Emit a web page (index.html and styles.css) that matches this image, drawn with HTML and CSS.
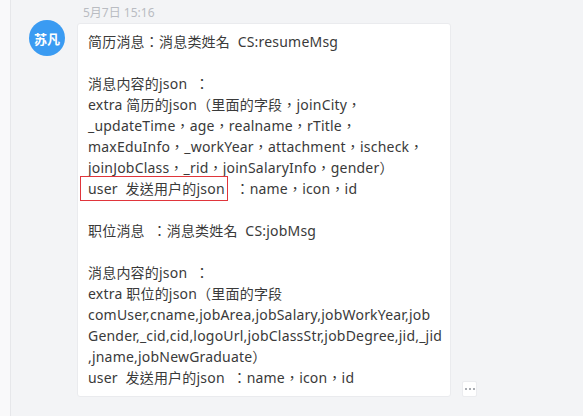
FILE: index.html
```html
<!DOCTYPE html>
<html lang="zh-Hant">
<head>
<meta charset="utf-8">
<link rel="stylesheet" href="styles.css">
</head>
<body>
<div class="page">
  <div class="rail"></div>
  <div class="chat">
    <div class="time">5月7日 15:16</div>
    <div class="msg">
      <div class="avatar">苏凡</div>
      <div class="bubble">
        <p>简历消息：消息类姓名 &nbsp;CS:resumeMsg</p>
        <p class="gap">消息内容的json &nbsp;：<br>
        extra 简历的json（里面的字段，joinCity，<br>
        _updateTime，age，realname，rTitle，<br>
        maxEduInfo，_workYear，attachment，ischeck，<br>
        joinJobClass，_rid，joinSalaryInfo，gender）<br>
        <span class="mark">user &nbsp;发送用户的json</span> &nbsp;：name，icon，id</p>
        <p class="gap">职位消息 &nbsp;：消息类姓名 &nbsp;CS:jobMsg</p>
        <p class="gap">消息内容的json &nbsp;：<br>
        extra 职位的json（里面的字段<br>
        comUser,cname,jobArea,jobSalary,jobWorkYear,job<br>
        Gender,_cid,cid,logoUrl,jobClassStr,jobDegree,jid,_jid<br>
        ,jname,jobNewGraduate）<br>
        user &nbsp;发送用户的json &nbsp;：name，icon，id</p>
      </div>
      <div class="more"><span></span><span></span><span></span></div>
    </div>
  </div>
</div>
</body>
</html>
```
FILE: styles.css
```css
html, body {
  margin: 0;
  padding: 0;
  height: 100%;
  background: #f3f4f6;
}
body {
  font-family: "Noto Sans", "Noto Sans CJK TC", sans-serif;
  color: #3a3a3a;
}
.page {
  display: flex;
  height: 416px;
  overflow: hidden;
}
.rail {
  width: 10px;
  flex: none;
  background: #f9f9fa;
  border-right: 1px solid #e6e7ea;
}
.chat {
  flex: 1;
  padding: 5px 0 0 18px;
}
.time {
  font-size: 12px;
  line-height: 16px;
  color: #b9bcc2;
  padding-left: 54px;
  height: 18px;
}
.msg {
  display: flex;
  align-items: flex-end;
}
.avatar {
  align-self: flex-start;
  width: 36px;
  height: 36px;
  border-radius: 50%;
  background: #3a9bf2;
  color: #fff;
  font-size: 13px;
  font-weight: bold;
  display: flex;
  align-items: center;
  justify-content: center;
  margin-top: -3px;
  flex: none;
}
.bubble {
  margin-left: 12px;
  width: 352px;
  background: #fff;
  border: 1px solid #eaebee;
  border-radius: 3px;
  padding: 7px 10px 8px 10px;
  font-size: 14px;
  line-height: 21px;
  letter-spacing: 0.2px;
  white-space: nowrap;
}
.bubble p {
  margin: 0;
}
.bubble p.gap {
  margin-top: 21px;
}
.mark {
  border: 1px solid #e0353b;
  margin-left: -8px;
  padding: 2px 2px 2px 7px;
}
.more {
  margin-left: 11px;
  width: 15px;
  height: 16px;
  box-sizing: border-box;
  background: #fff;
  border: 1px solid #ebecef;
  border-radius: 2px;
  display: flex;
  align-items: center;
  justify-content: center;
  gap: 2px;
}
.more span {
  width: 2px;
  height: 2px;
  background: #a9acb2;
}
```
